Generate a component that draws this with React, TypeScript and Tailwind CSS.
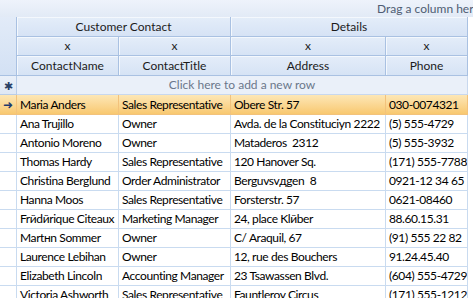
import { Fragment } from 'react'

const rows = [
  ['Maria Anders', 'Sales Representative', 'Obere Str. 57', '030-0074321'],
  ['Ana Trujillo', 'Owner', 'Avda. de la Constituciуn 2222', '(5) 555-4729'],
  ['Antonio Moreno', 'Owner', 'Mataderos  2312', '(5) 555-3932'],
  ['Thomas Hardy', 'Sales Representative', '120 Hanover Sq.', '(171) 555-7788'],
  ['Christina Berglund', 'Order Administrator', 'Berguvsvдgen  8', '0921-12 34 65'],
  ['Hanna Moos', 'Sales Representative', 'Forsterstr. 57', '0621-08460'],
  ['Frйdйrique Citeaux', 'Marketing Manager', '24, place Klйber', '88.60.15.31'],
  ['Martнn Sommer', 'Owner', 'C/ Araquil, 67', '(91) 555 22 82'],
  ['Laurence Lebihan', 'Owner', '12, rue des Bouchers', '91.24.45.40'],
  ['Elizabeth Lincoln', 'Accounting Manager', '23 Tsawassen Blvd.', '(604) 555-4729'],
  ['Victoria Ashworth', 'Sales Representative', 'Fauntleroy Circus', '(171) 555-1212'],
]

const cols = 'grid grid-cols-[17px_102px_112px_155px_82px_1fr]'
const hdr = 'bg-gradient-to-b from-[#e4edf9] to-[#d6e3f5] border-r border-b border-[#a9c1e2] shadow-[inset_1px_1px_0_#f4f8fd] flex items-center justify-center text-[#1b1b1b]'

export default function App() {
  return (
    <div className="w-[473px] h-[298px] overflow-hidden bg-white text-[12px] leading-none font-['Lato',sans-serif]">
      {/* group panel */}
      <div className="h-[17px] bg-gradient-to-b from-[#eef3fb] to-[#e2eaf6] flex items-center pl-[377px] whitespace-nowrap overflow-hidden text-[#4f5d73]">
        Drag a column here to group by that column
      </div>

      {/* header */}
      <div className={cols + ' grid-rows-[20px_19px_20px]'}>
        <div className="row-span-3 bg-gradient-to-b from-[#e2ebf8] to-[#d3e1f4] border-r border-b border-[#a9c1e2]" />
        <div className={hdr + ' col-span-2'}>Customer Contact</div>
        <div className={hdr + ' col-span-2'}>Details</div>
        <div className="row-span-3 bg-white" />
        <div className={hdr}>x</div>
        <div className={hdr}>x</div>
        <div className={hdr}>x</div>
        <div className={hdr}>x</div>
        <div className={hdr}>ContactName</div>
        <div className={hdr}>ContactTitle</div>
        <div className={hdr}>Address</div>
        <div className={hdr}>Phone</div>
      </div>

      {/* new row */}
      <div className={cols + ' h-[19px]'}>
        <div className="bg-gradient-to-b from-[#eaf0f9] to-[#dfe8f5] border-r border-b border-[#b9cde8] flex items-center justify-center text-[#2a3f66] text-[11px]">✱</div>
        <div className="col-span-4 bg-[#eaf0f9] border-r border-b border-[#c8d8ee] flex items-center justify-center text-[#6a778b]">
          Click here to add a new row
        </div>
        <div />
      </div>

      {/* data */}
      {rows.map((r, i) => {
        const sel = i === 0
        const cell = sel
          ? 'bg-gradient-to-b from-[#fde7b6] to-[#f8c86f] border-r border-b border-[#f2c27c]'
          : 'bg-white border-r border-b border-[#c9dbf0]'
        return (
          <div key={i} className={cols + (sel ? ' h-[20px]' : ' h-[19px]')}>
            <div className={cell + ' flex items-center justify-center text-[#1d3a6d] text-[12px]'}>{sel ? '➜' : ''}</div>
            {r.map((v, j) => (
              <Fragment key={j}>
                <div className={cell + ' flex items-center px-[3px] whitespace-pre overflow-hidden text-black tracking-[-0.4px]'}>{v}</div>
              </Fragment>
            ))}
            <div />
          </div>
        )
      })}
    </div>
  )
}
